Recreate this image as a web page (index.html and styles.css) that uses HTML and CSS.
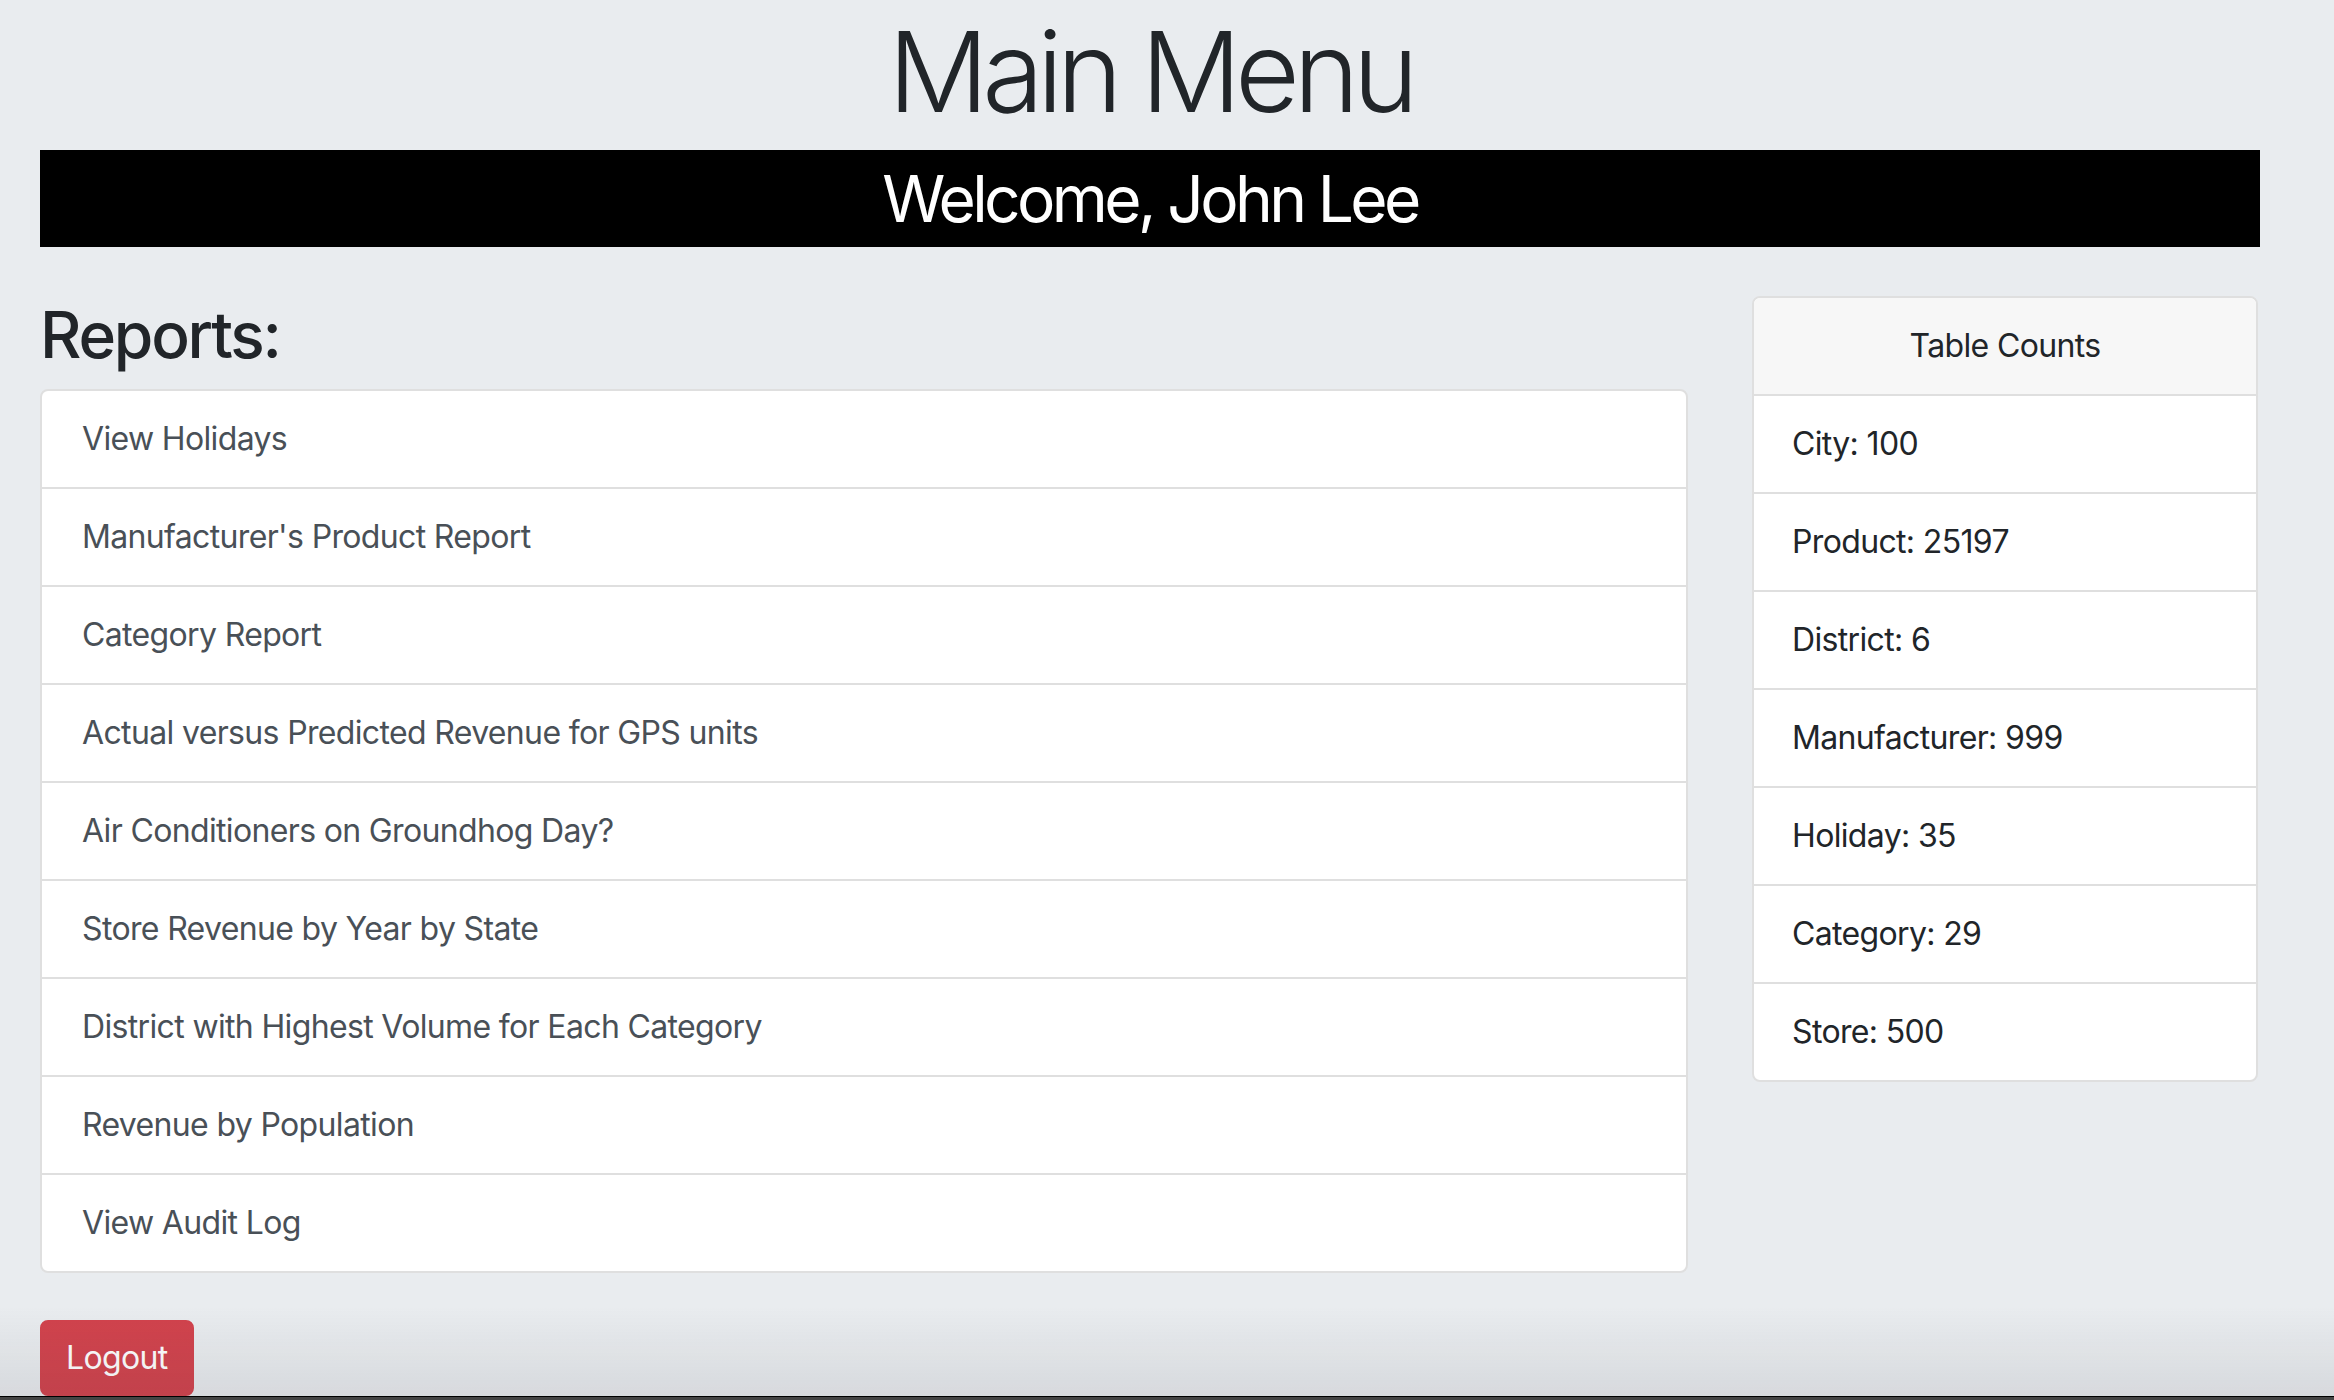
FILE: index.html
```html
<!DOCTYPE html>
<html lang="en">
<head>
<meta charset="utf-8">
<title>Main Menu</title>
<link rel="stylesheet" href="styles.css">
</head>
<body>
<div class="page">
  <h1 class="title">Main Menu</h1>
  <div class="welcome">
    <h1 class="welcome-text">Welcome, John Lee</h1>
  </div>
  <div class="row">
    <div class="col-main">
      <h2 class="reports-heading">Reports:</h2>
      <div class="list">
        <a class="list-item" href="#">View Holidays</a>
        <a class="list-item" href="#">Manufacturer's Product Report</a>
        <a class="list-item" href="#">Category Report</a>
        <a class="list-item" href="#">Actual versus Predicted Revenue for GPS units</a>
        <a class="list-item" href="#">Air Conditioners on Groundhog Day?</a>
        <a class="list-item" href="#">Store Revenue by Year by State</a>
        <a class="list-item" href="#">District with Highest Volume for Each Category</a>
        <a class="list-item" href="#">Revenue by Population</a>
        <a class="list-item" href="#">View Audit Log</a>
      </div>
    </div>
    <div class="col-side">
      <div class="card">
        <div class="card-header">Table Counts</div>
        <ul class="count-list">
          <li class="count-item">City: 100</li>
          <li class="count-item">Product: 25197</li>
          <li class="count-item">District: 6</li>
          <li class="count-item">Manufacturer: 999</li>
          <li class="count-item">Holiday: 35</li>
          <li class="count-item">Category: 29</li>
          <li class="count-item">Store: 500</li>
        </ul>
      </div>
    </div>
  </div>
  <button class="logout" type="button">Logout</button>
</div>
<div class="bottom-shade"></div>
<div class="dock-strip"></div>
</body>
</html>
```
FILE: styles.css
```css
html, body {
  margin: 0;
  padding: 0;
  background: #e9ecef;
}
body {
  font-family: Inter, "Liberation Sans", sans-serif;
  color: #212529;
  height: 1400px;
  overflow: hidden;
}
.page {
  width: 2220px;
  padding: 0 40px;
}
.title {
  margin: 0 0 12px 0;
  padding-top: 4px;
  font-size: 112px;
  font-weight: 300;
  line-height: 134px;
  letter-spacing: -6.6px;
  text-align: center;
  color: #212529;
}
.welcome {
  background: #000;
  height: 97px;
  display: flex;
  align-items: center;
  justify-content: center;
}
.welcome-text {
  margin: 0;
  font-size: 64px;
  font-weight: 400;
  line-height: 77px;
  letter-spacing: -3.6px;
  color: #fff;
}
.row {
  display: flex;
  gap: 60px;
  margin-top: 49px;
  align-items: flex-start;
}
.col-main {
  width: 1650px;
}
.col-side {
  width: 510px;
}
.reports-heading {
  margin: 0 0 16px 0;
  font-size: 64px;
  font-weight: 500;
  line-height: 77px;
  letter-spacing: -2.2px;
  color: #212529;
}
.list {
  display: flex;
  flex-direction: column;
  background: #fff;
  border: 2px solid #dfdfdf;
  border-radius: 8px;
  width: 1644px;
}
.list-item {
  display: block;
  padding: 24px 40px;
  font-size: 32px;
  line-height: 48px;
  letter-spacing: -0.65px;
  color: #495057;
  text-decoration: none;
  border-top: 2px solid #dfdfdf;
}
.list-item:first-child {
  border-top: none;
}
.card {
  background: #fff;
  border: 2px solid #dfdfdf;
  border-radius: 8px;
  overflow: hidden;
  width: 502px;
  margin-left: 2px;
}
.card-header {
  background: #f7f7f7;
  padding: 24px 40px;
  font-size: 32px;
  line-height: 48px;
  letter-spacing: -0.65px;
  text-align: center;
  border-bottom: 2px solid #dfdfdf;
}
.count-list {
  list-style: none;
  margin: 0;
  padding: 0;
}
.count-item {
  padding: 24px 40px 24px 38px;
  font-size: 32px;
  line-height: 48px;
  letter-spacing: -0.65px;
  color: #212529;
  border-top: 2px solid #dfdfdf;
}
.count-item:first-child {
  border-top: none;
}
.logout {
  margin-top: 47px;
  display: inline-block;
  background: #d2434d;
  color: #fff;
  border: 2px solid #d2434d;
  border-radius: 8px;
  padding: 12px 24px;
  font-family: Inter, "Liberation Sans", sans-serif;
  font-size: 32px;
  line-height: 48px;
  letter-spacing: -0.65px;
  cursor: pointer;
}
.bottom-shade {
  position: fixed;
  left: 0;
  right: 0;
  bottom: 4px;
  height: 90px;
  background: linear-gradient(to bottom, rgba(60, 60, 70, 0), rgba(60, 60, 70, 0.1));
  pointer-events: none;
}
.dock-strip {
  position: fixed;
  left: 0;
  right: 0;
  bottom: 0;
  height: 3px;
  background: #444;
  border-top: 1px solid #000;
}
```
